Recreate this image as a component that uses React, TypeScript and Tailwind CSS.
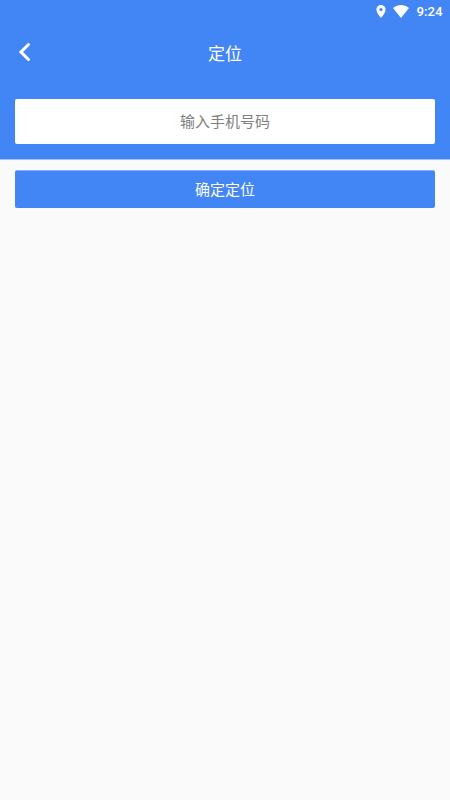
export default function App() {
  return (
    <div className="flex h-[800px] w-[450px] flex-col bg-[#fafafa] font-['Roboto','Noto_Sans_CJK_SC',sans-serif]">
      <header className="flex h-[160px] flex-col border-b border-[#a0c3f8] bg-[#4285f4] text-white">
        <div className="flex h-[23px] items-center justify-end pr-[7.500px]">
          <svg className="mr-[7px] h-[13px] w-[10px]" viewBox="0 0 10 13" fill="currentColor">
            <path fillRule="evenodd" d="M5 0C2.4 0 .4 2 .4 4.6C.4 8 5 13 5 13S9.600 8 9.600 4.600C9.600 2 7.600 0 5 0ZM5 3a1.600 1.600 0 1 1 0 3.200a1.600 1.600 0 0 1 0-3.200Z" />
          </svg>
          <svg className="mr-[8px] h-[13px] w-[16px]" viewBox="0 0 17 13" preserveAspectRatio="none" fill="currentColor">
            <path d="M0 3C5-1 12-1 17 3L8.500 13Z" />
          </svg>
          <span className="text-[13.200px] font-medium leading-none">9:24</span>
        </div>
        <div className="grid h-[60px] grid-cols-[60px_1fr_60px] items-center">
          <button aria-label="返回" className="ml-[18px] flex h-6 w-4 items-center pb-[2px]">
            <svg className="h-[20px] w-[14px]" viewBox="0 0 14 20" fill="none" stroke="currentColor" strokeWidth="3" strokeLinecap="round">
              <path d="M10.500 2.500L3 10L10.500 17.500" />
            </svg>
          </button>
          <h1 className="pt-[2px] text-center text-[17px] leading-6">定位</h1>
        </div>
        <div className="px-[15px] pt-4">
          <input aria-label="手机号码" placeholder="输入手机号码" className="block h-[45px] w-full rounded-[2px] bg-white pt-px text-center text-[15px] text-black outline-none placeholder:text-[#808080]" />
        </div>
      </header>
      <main className="px-[15px] pt-[10px]">
        <button className="flex h-[38px] w-full items-center justify-center rounded-[2px] border-t border-[#85b0f7] bg-[#4285f4] pt-px text-[15px] text-white">确定定位</button>
      </main>
    </div>
  );
}
